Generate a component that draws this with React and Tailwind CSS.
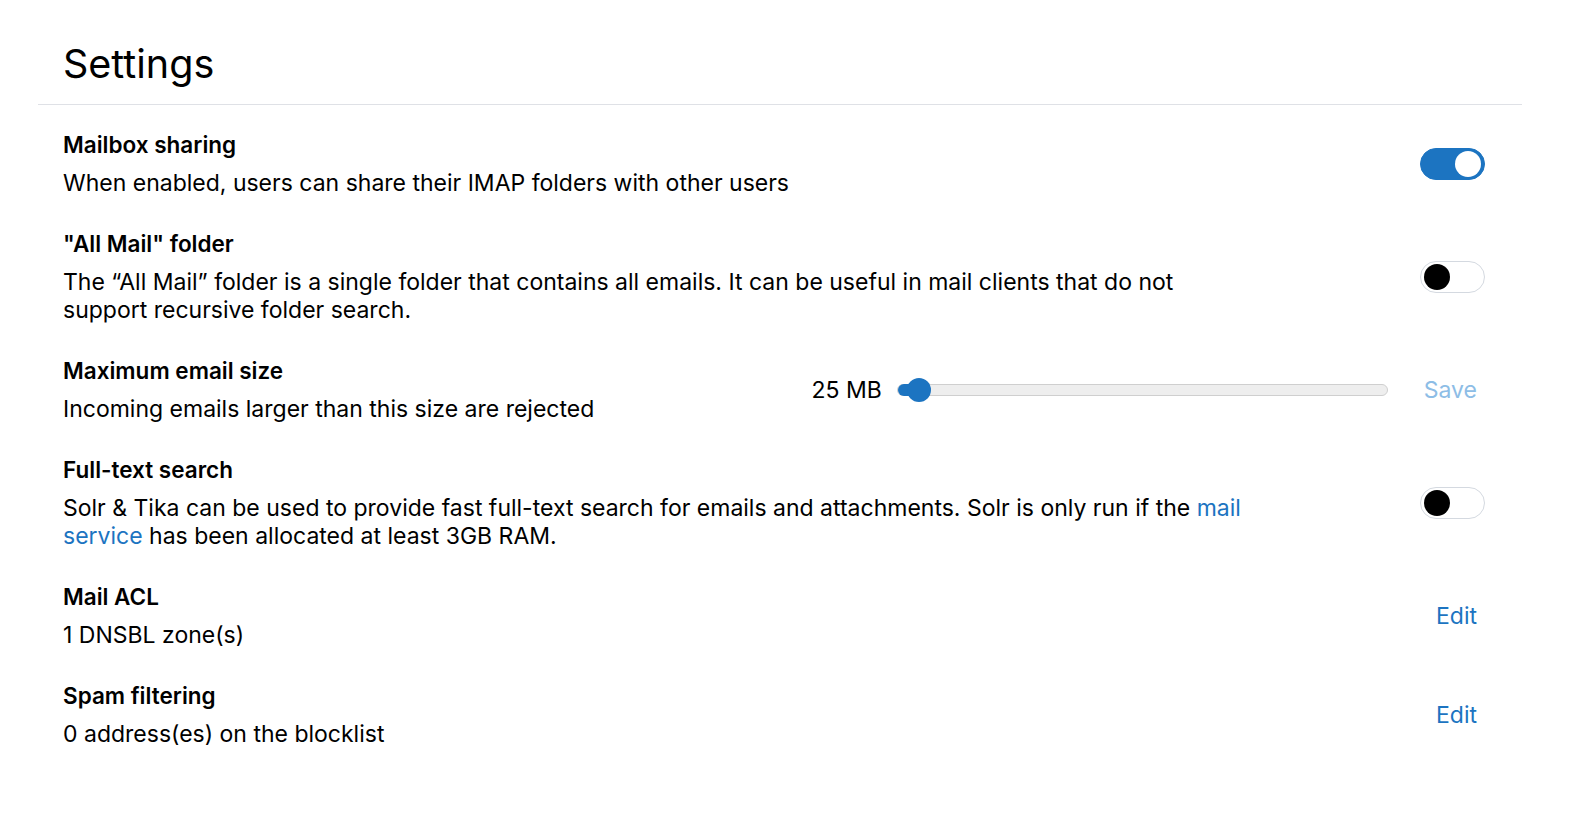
import { useState } from 'react';

function Toggle({ on, onChange }) {
  return (
    <button
      onClick={() => onChange(!on)}
      className={`relative w-[65px] h-[32px] rounded-full border shrink-0 ${
        on ? 'bg-[#1c74c1] border-[#1c74c1]' : 'bg-white border-[#d4d9e0]'
      }`}
    >
      <span
        className={`absolute top-1/2 -translate-y-1/2 w-[26px] h-[26px] rounded-full ${
          on ? 'right-[3px] bg-white' : 'left-[3px] bg-black'
        }`}
      />
    </button>
  );
}

function Row({ title, children, control }) {
  return (
    <div className="flex items-center justify-between">
      <div className="max-w-[1190px]">
        <div className="text-[22.5px] leading-[28px] font-semibold text-black">{title}</div>
        <div className="mt-[10px] text-[23px] leading-[28px] text-black">{children}</div>
      </div>
      {control}
    </div>
  );
}

export default function App() {
  const [sharing, setSharing] = useState(true);
  const [allMail, setAllMail] = useState(false);
  const [fts, setFts] = useState(false);
  const [size] = useState(25);

  return (
    <div className="min-h-screen bg-white" style={{ fontFamily: 'Inter, "Noto Sans", sans-serif' }}>
      <div className="ml-[38px] w-[1484px]">
        <div className="pl-[25px] pt-[42px] pb-[18px] border-b border-[#dfe1e6]">
          <h1 className="text-[39.5px] leading-[44px] font-normal text-black">Settings</h1>
        </div>
        <div className="pl-[25px] pr-[37px] pt-[26px] flex flex-col gap-[33px]">
          <Row
            title="Mailbox sharing"
            control={<Toggle on={sharing} onChange={setSharing} />}
          >
            When enabled, users can share their IMAP folders with other users
          </Row>
          <Row
            title={'"All Mail" folder'}
            control={<Toggle on={allMail} onChange={setAllMail} />}
          >
            The “All Mail” folder is a single folder that contains all emails. It can be useful in mail clients that do not support recursive folder search.
          </Row>
          <div className="flex items-center">
            <div className="flex-1">
              <div className="text-[22.5px] leading-[28px] font-semibold text-black">Maximum email size</div>
              <div className="mt-[10px] text-[23px] leading-[28px] text-black">
                Incoming emails larger than this size are rejected
              </div>
            </div>
            <div className="flex items-center">
              <span className="text-[23px] text-black">{size} MB</span>
              <div className="relative ml-[15px] w-[491px] h-[12px] rounded-full bg-[#eeeeee] border border-[#cfcfcf]">
                <div className="absolute left-0 top-[-1px] h-[12px] w-[24px] rounded-l-full bg-[#1c74c1]" />
                <div className="absolute left-[9px] top-1/2 -translate-y-1/2 w-[24px] h-[24px] rounded-full bg-[#1c74c1]" />
              </div>
              <button className="ml-[28px] px-2 text-[23px] text-[#8dbde6]">Save</button>
            </div>
          </div>
          <Row
            title="Full-text search"
            control={<Toggle on={fts} onChange={setFts} />}
          >
            Solr &amp; Tika can be used to provide fast full-text search for emails and attachments. Solr is only run if the{' '}
            <a href="#" className="text-[#1c74c1]">mail service</a> has been allocated at least 3GB RAM.
          </Row>
          <Row
            title="Mail ACL"
            control={<button className="px-2 text-[23px] text-[#1c74c1]">Edit</button>}
          >
            1 DNSBL zone(s)
          </Row>
          <Row
            title="Spam filtering"
            control={<button className="px-2 text-[23px] text-[#1c74c1]">Edit</button>}
          >
            0 address(es) on the blocklist
          </Row>
        </div>
      </div>
    </div>
  );
}
